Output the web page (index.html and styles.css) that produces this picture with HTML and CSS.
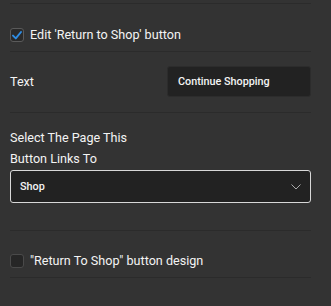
FILE: index.html
```html
<!DOCTYPE html>
<html>
<head>
<meta charset="utf-8">
<link rel="stylesheet" href="styles.css">
</head>
<body>
<div class="panel">
  <div class="divider first"></div>
  <label class="check-row top">
    <span class="box checked">
      <svg width="10" height="9" viewBox="0 0 10 9"><path d="M1 4.6 L3.8 7.4 L9 1" fill="none" stroke="#2f8de4" stroke-width="1.9" stroke-linecap="round" stroke-linejoin="round"/></svg>
    </span>
    <span class="check-label">Edit 'Return to Shop' button</span>
  </label>
  <div class="field-row">
    <span class="label">Text</span>
    <div class="input">Continue Shopping</div>
  </div>
  <div class="select-section">
    <div class="label multi">Select The Page This<br>Button Links To</div>
    <div class="select">
      <span>Shop</span>
      <svg width="10" height="6" viewBox="0 0 10 6"><path d="M0.5 0.5 L5 5 L9.5 0.5" fill="none" stroke="#aaa" stroke-width="1"/></svg>
    </div>
  </div>
  <label class="check-row bottom">
    <span class="box"></span>
    <span class="check-label">"Return To Shop" button design</span>
  </label>
</div>
</body>
</html>
```
FILE: styles.css
```css
html, body {
  margin: 0;
  padding: 0;
  background: #333333;
}
body {
  font-family: Roboto, "Liberation Sans", sans-serif;
  color: #f4f4f4;
  width: 331px;
  height: 306px;
  overflow: hidden;
}
.panel {
  padding: 3px 20px 0 10px;
}
.divider {
  height: 1px;
  background: #2b2b2b;
}
.check-row {
  display: flex;
  align-items: center;
  gap: 6px;
  border-bottom: 1px solid #2b2b2b;
}
.check-row.top {
  padding: 24px 0 9px;
}
.check-row.bottom {
  border-top: 1px solid #2b2b2b;
  padding: 23px 0 9px;
}
.box {
  width: 12px;
  height: 12px;
  border: 1px solid #4a4a4a;
  border-radius: 3px;
  background: #262626;
  display: flex;
  align-items: center;
  justify-content: center;
  flex: none;
}
.box.checked {
  border-color: #5a5a5a;
  background: #2a2a2a;
}
.check-label {
  font-size: 12.6px;
  line-height: 14px;
}
.field-row {
  display: flex;
  align-items: center;
  justify-content: space-between;
  padding: 14px 0 15px;
  border-bottom: 1px solid #2b2b2b;
}
.label {
  font-size: 12.6px;
}
.input {
  width: 132px;
  height: 29px;
  box-sizing: content-box;
  border: 1px solid #2c2c2c;
  border-radius: 3px;
  background: #222222;
  font-size: 10.8px;
  font-weight: 500;
  line-height: 29px;
  padding-left: 10px;
}
.select-section {
  padding: 14px 0 27px;
}
.label.multi {
  line-height: 21px;
  margin-bottom: 1px;
}
.select {
  height: 31px;
  border: 1px solid #d8d8d8;
  border-radius: 3px;
  background: #222222;
  display: flex;
  align-items: center;
  justify-content: space-between;
  padding: 0 9px 0 9px;
  font-size: 10.8px;
  font-weight: 500;
}
```
